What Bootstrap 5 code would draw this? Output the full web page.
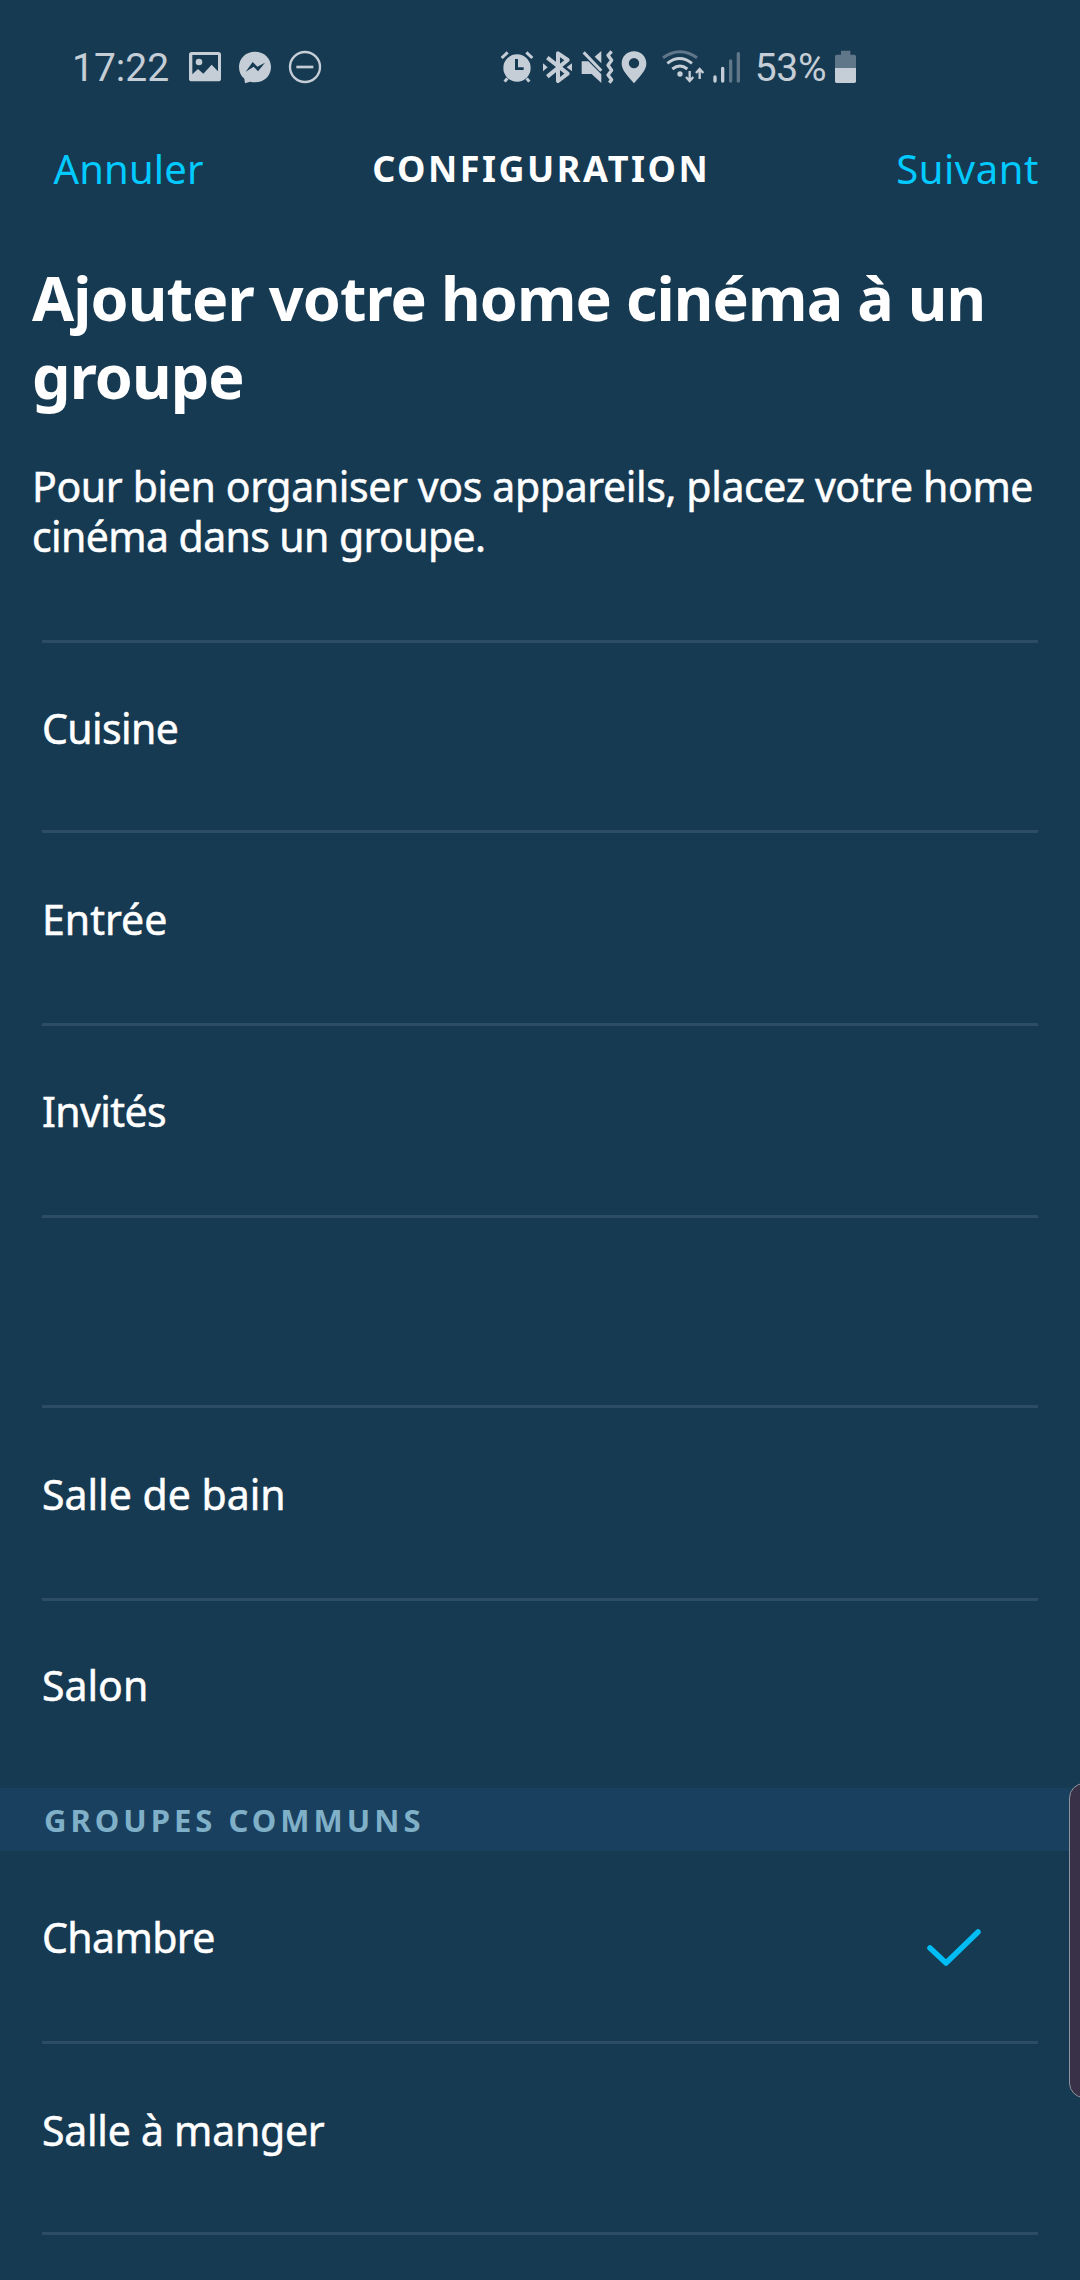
<!DOCTYPE html>
<html lang="fr">
<head>
<meta charset="utf-8">
<meta name="viewport" content="width=device-width, initial-scale=1">
<title>Configuration</title>
<link href="https://cdn.jsdelivr.net/npm/bootstrap@5.3.0/dist/css/bootstrap.min.css" rel="stylesheet">
<style>
  body { background: #173a53; color: #fff; font-family: "Noto Sans", "Open Sans", sans-serif; font-size: 41px; line-height: 50px; min-height: 2280px; overflow-x: hidden; }
  .statusbar { height: 135px; padding-left: 72px; font: 400 39px/46px Roboto, sans-serif; color: #c5ced6; }
  .statusbar svg { height: 35px; fill: currentColor; flex: none; }
  .clock { width: 109px; }
  .sys-icons { margin-left: 170px; }
  .percent { width: 75px; margin-left: 6px; letter-spacing: -.3px; }
  .stroked { fill: none; stroke: currentColor; }
  .faded { opacity: .42; }
  .appbar { height: 68px; font-size: 40px; }
  .appbar a { color: #00caff; flex: 1 1 0; }
  .cancel { padding-left: 53.5px; letter-spacing: .15px; }
  .next { padding-right: 41px; letter-spacing: .55px; }
  .appbar-title { font-size: 36px; font-weight: 700; letter-spacing: 2.5px; margin: 0 5px 0 -5px; line-height: 50px; }
  .intro { padding: 56px 0 79px 32px; }
  .intro h1 { font-size: 61px; line-height: 77.8px; font-weight: 700; letter-spacing: -.92px; margin-bottom: 46px; }
  .intro p { letter-spacing: -.37px; }
  .intro p, .rooms { -webkit-text-stroke: .5px #fff; }
  .tight { letter-spacing: -.6px; }
  .rooms { padding: 0 42px; --bs-list-group-bg: transparent; --bs-list-group-color: #fff; --bs-list-group-border-color: #2d4d66; }
  .rooms .list-group-item { height: 191.4px; padding: 60px 0 0; border-width: 3px 0 0; border-radius: 0; margin: 0; }
  .rooms .list-group-item:nth-child(1), .rooms .list-group-item:nth-child(4), .rooms .list-group-item:nth-child(6) { height: 190px; }
  .rooms .list-group-item:nth-child(2), .rooms .list-group-item:nth-child(5) { height: 193px; padding-top: 61px; }
  .rooms .list-group-item:nth-child(3) { height: 192px; }
  .rooms .list-group-item:nth-child(6) { padding-top: 59px; }
  .rooms.common .list-group-item:nth-child(1) { border-top-width: 0; padding-top: 61px; }
  .rooms.common .list-group-item:nth-child(2) { height: 191px; }
  .rooms.common .list-group-item:nth-child(3) { height: 48px; padding: 0; }
  .group-title { height: 63px; background: #1a4060; color: #7fb0c8; font-size: 31px; font-weight: 700; letter-spacing: 4px; padding-left: 44px; line-height: 65px; }
  .tick { width: 56px; height: 40px; margin: 16px 57px 0 0; }
  .edge-panel { position: absolute; left: 1069px; top: 1783px; width: 30px; height: 315px; background: #383147; border: 1.5px solid #8e949e; border-radius: 16px; }
</style>
</head>
<body class="position-relative">
<header>
  <div class="statusbar d-flex align-items-center">
    <span class="clock">17:22</span>
    <svg width="49" viewBox="393 60 147 105"><path fill-rule="evenodd" d="M425 66h80q8 0 8 8v72q0 8-8 8h-80q-8 0-8-8V74q0-8 8-8zm2 9v58l17-16 16 14 25-27 19 20V75zM447 86a10 10 0 1 1 0 20 10 10 0 0 1 0-20z"/></svg>
    <svg width="50" viewBox="540 60 150 105"><path fill-rule="evenodd" d="M615 65c28 0 48 20 48 46s-20 46-48 46q-8 0-15-2l-15 5-2-14c-10-8-16-20-16-35 0-26 20-46 48-46zm-28 60 24-15 13 14 21-26-23 12-14-14z"/></svg>
    <svg width="50" viewBox="690 60 150 105"><circle class="stroked" cx="765" cy="111" r="45" stroke-width="7"/><path d="M739 107h51v8h-51z"/></svg>

    <div class="sys-icons d-flex align-items-center">
      <svg width="38" viewBox="60 60 114 105"><path class="stroked" stroke-width="9" d="m65 84 18-17m56 0 18 17M82 145l-8 10m66-10 8 10"/><path fill-rule="evenodd" d="M111 73a41 41 0 1 1 0 82 41 41 0 0 1 0-82zm-6 14v33h26v-8h-17V87z"/></svg>
      <svg width="38.67" viewBox="174 60 116 105"><path class="stroked" stroke-width="12" stroke-linejoin="round" d="m202 83 61 48-29 22V70l29 20-61 50"/><path d="m189 100 14 12-14 12zm87 0-16 12 16 12z"/></svg>
      <svg width="40.67" viewBox="290 60 122 105"><path d="M304 94h20l39 39v26l-29-27h-30zM343 80l20-17v37z"/><path class="stroked" stroke-width="9" d="m310 67 53 55"/><path class="stroked" stroke-width="10" stroke-linejoin="round" d="m394 64-11 12 11 15-11 15 11 15-11 14 11 14-7 9"/></svg>
      <svg width="38" viewBox="412 60 114 105"><path fill-rule="evenodd" d="M463 64c21 0 37 16 37 37 0 20-19 37-37 59-18-22-37-39-37-59 0-21 16-37 37-37zm0 20a15 15 0 1 0 0 31 15 15 0 0 0 0-31z"/></svg>
      <svg width="53.33" viewBox="526 60 160 105"><g class="stroked" stroke-width="9"><path class="faded" d="M550 83q51-36 102 0"/><path d="M563 100q37-29 74 0M578 117q23-18 45 0"/><path stroke-width="7" d="M630 123v29m-11-11 11 12 11-12M660 147v-29m-11 11 11-12 11 12"/></g><circle cx="601" cy="132" r="8"/></svg>
      <svg width="40" viewBox="686 60 120 105"><g class="stroked" stroke-width="10" stroke-linecap="round"><path d="M704 141v12M727 115v38"/><path class="faded" d="M751 93v60M774 71v82"/></g></svg>
      <span class="percent">53%</span>
      <svg width="28.33" viewBox="1050 60 85 105"><path class="faded" d="M1083 62h28v12h12q5 0 5 5v35h-63V79q0-5 5-5h13z"/><path d="M1065 114h63v40q0 5-5 5h-53q-5 0-5-5z"/></svg>
    </div>
  </div>
  <nav class="appbar d-flex align-items-center">
    <a class="cancel text-decoration-none" href="#">Annuler</a>
    <div class="appbar-title">CONFIGURATION</div>
    <a class="next text-decoration-none text-end" href="#">Suivant</a>
  </nav>
</header>
<main>
  <section class="intro">
    <h1>Ajouter votre home cinéma à un<br>groupe</h1>
    <p class="mb-0 text-nowrap">Pour bien organiser vos appareils, placez votre home<br><span class="tight">cinéma dans un groupe.</span></p>
  </section>
  <ul class="list-group rooms">
    <li class="list-group-item tight">Cuisine</li>
    <li class="list-group-item">Entrée</li>
    <li class="list-group-item tight">Invités</li>
    <li class="list-group-item"></li>
    <li class="list-group-item">Salle de bain</li>
    <li class="list-group-item">Salon</li>
  </ul>
  <div class="group-title">GROUPES COMMUNS</div>
  <ul class="list-group rooms common">
    <li class="list-group-item tight d-flex justify-content-between align-items-start">Chambre
      <svg class="tick" viewBox="0 0 56 40"><path d="m5 20 16 15L53 4" fill="none" stroke="#00bef5" stroke-width="5.5" stroke-linecap="round" stroke-linejoin="round"/></svg>
    </li>
    <li class="list-group-item"><span style="letter-spacing:-.25px">Salle à manger</span></li>
    <li class="list-group-item"></li>
  </ul>
</main>
<div class="edge-panel"></div>
<script src="https://cdn.jsdelivr.net/npm/bootstrap@5.3.0/dist/js/bootstrap.bundle.min.js"></script>
</body>
</html>
